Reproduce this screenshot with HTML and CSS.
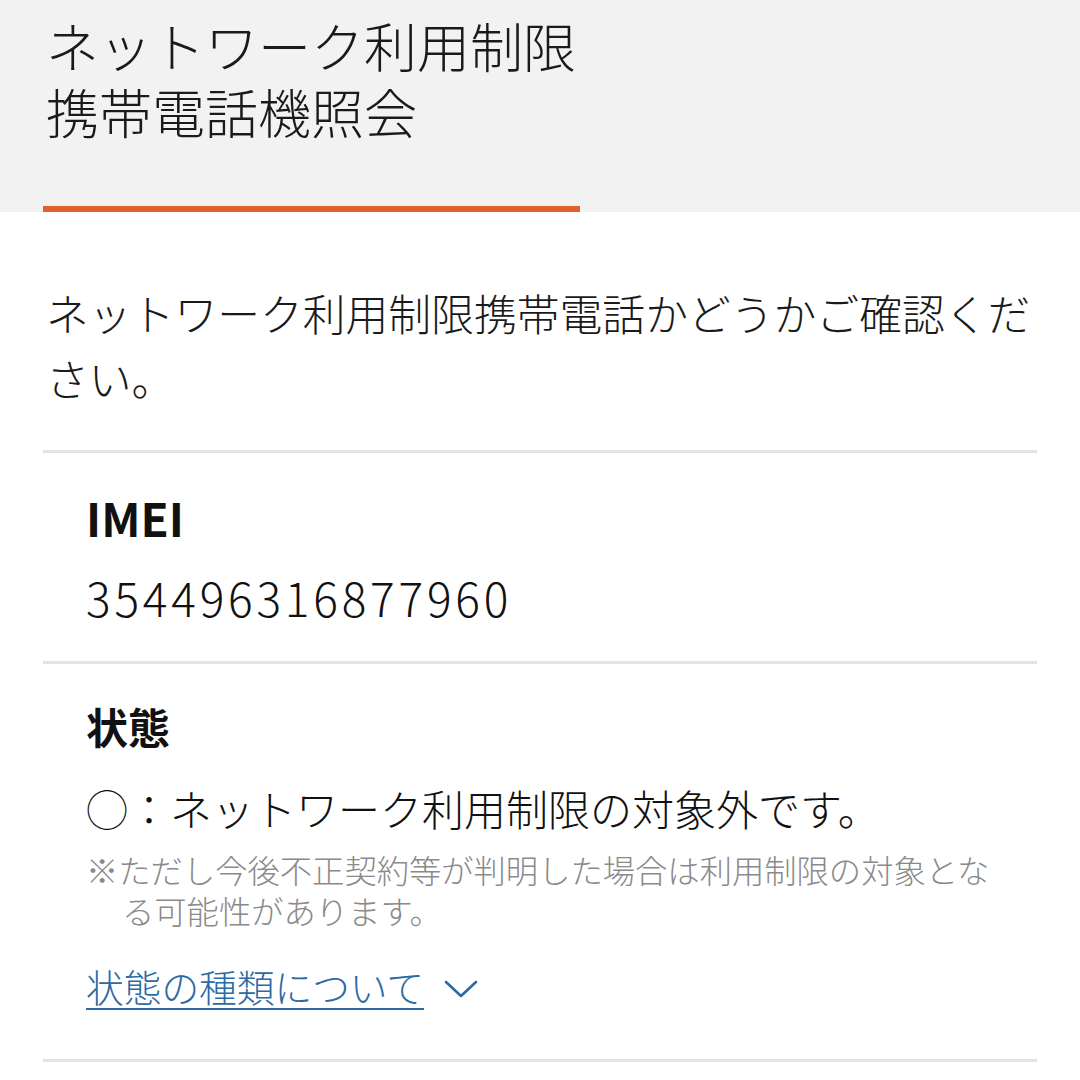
FILE: index.html
```html
<!DOCTYPE html>
<html lang="ja">
<head>
<meta charset="utf-8">
<link rel="stylesheet" href="styles.css">
</head>
<body>
<header class="top">
  <h1 class="title">ネットワーク利用制限<br>携帯電話機照会</h1>
  <div class="accent"></div>
</header>
<main class="content">
  <p class="intro">ネットワーク利用制限携帯電話かどうかご確認ください。</p>
  <section class="block block-imei">
    <h2 class="label">IMEI</h2>
    <p class="value">354496316877960</p>
  </section>
  <section class="block block-status">
    <h2 class="label label-jp">状態</h2>
    <p class="status">◯：ネットワーク利用制限の対象外です。</p>
    <p class="note">※ただし今後不正契約等が判明した場合は利用制限の対象となる可能性があります。</p>
    <div class="more">
      <a class="more-link" href="#">状態の種類について</a>
      <svg class="chevron" width="34" height="20" viewBox="0 0 34 20"><polyline points="2,3 17,17 32,3" fill="none" stroke="#2c6aa5" stroke-width="2.6" stroke-linecap="round" stroke-linejoin="round"/></svg>
    </div>
  </section>
</main>
</body>
</html>
```
FILE: styles.css
```css
html, body {
  margin: 0;
  padding: 0;
  background: #ffffff;
}
body {
  font-family: "Noto Sans CJK JP", "Noto Sans", sans-serif;
  color: #111111;
  width: 1080px;
}
.top {
  background: #f2f2f2;
  padding: 12px 43px 0;
  display: flex;
  flex-direction: column;
}
.title {
  margin: 0;
  padding-left: 3px;
  font-size: 53px;
  line-height: 66px;
  font-weight: 300;
  color: #1a1a1a;
}
.accent {
  margin-top: 62px;
  width: 537px;
  height: 6px;
  background: #e0622a;
}
.content {
  padding: 0 43px;
}
.intro {
  margin: 0;
  padding: 68px 0 40px 3px;
  font-size: 42.8px;
  line-height: 65px;
  font-weight: 300;
  color: #1a1a1a;
}
.block {
  border-top: 3px solid #e3e3e3;
  padding-left: 43px;
}
.block-imei {
  padding-top: 34px;
  padding-bottom: 34px;
}
.block-status {
  padding-top: 32px;
  padding-bottom: 48px;
  border-bottom: 3px solid #e3e3e3;
}
.label {
  margin: 0;
  font-size: 46px;
  line-height: 60px;
  font-weight: 700;
  color: #111;
}
.label-jp {
  font-size: 42px;
}
.value {
  margin: 20px 0 0;
  font-size: 46px;
  line-height: 60px;
  font-weight: 300;
  letter-spacing: 3.8px;
  color: #111;
}
.status {
  margin: 22px 0 0;
  font-size: 42px;
  line-height: 60px;
  font-weight: 300;
  color: #111;
}
.note {
  margin: 11px 0 0;
  font-size: 32.3px;
  line-height: 41px;
  font-weight: 300;
  color: #8a8a8a;
  padding-left: 36px;
  text-indent: -36px;
  padding-right: 30px;
}
.more {
  margin-top: 30px;
  display: flex;
  align-items: center;
  gap: 20px;
  height: 50px;
}
.more-link {
  font-size: 37.7px;
  line-height: 50px;
  font-weight: 300;
  color: #2c6aa5;
  text-decoration: underline;
  text-underline-offset: 6px;
  text-decoration-thickness: 2px;
}
.chevron {
  display: block;
  margin-top: 6px;
}
```
